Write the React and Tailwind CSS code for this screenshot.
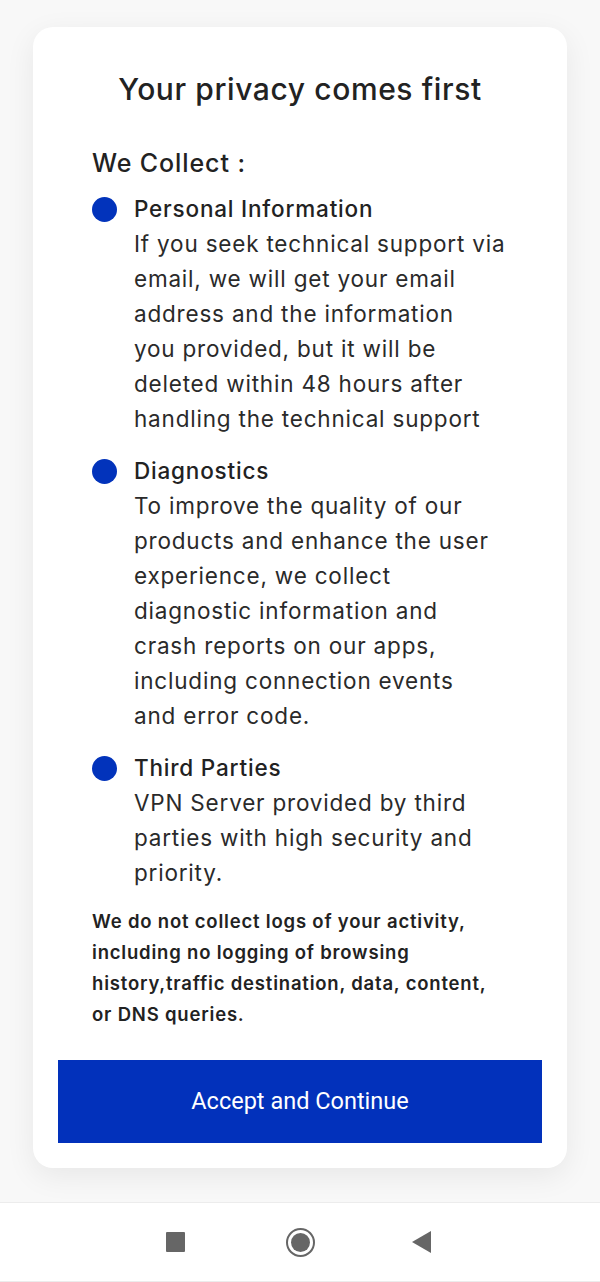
import React from 'react';

const ITEMS = [
    {
        title: 'Personal Information',
        lines: [
            'If you seek technical support via',
            'email, we will get your email',
            'address and the information',
            'you provided, but it will be',
            'deleted within 48 hours after',
            'handling the technical support',
        ],
    },
    {
        title: 'Diagnostics',
        lines: [
            'To improve the quality of our',
            'products and enhance the user',
            'experience, we collect',
            'diagnostic information and',
            'crash reports on our apps,',
            'including connection events',
            'and error code.',
        ],
    },
    {
        title: 'Third Parties',
        lines: [
            'VPN Server provided by third',
            'parties with high security and',
            'priority.',
        ],
    },
];

const NOTE = [
    'We do not collect logs of your activity,',
    'including no logging of browsing',
    'history,traffic destination, data, content,',
    'or DNS queries.',
];

export default function App() {
    return (
        <div className="min-h-screen bg-[#f8f8f8] flex flex-col font-['Inter',sans-serif] text-[#222]">
            <div className="px-[33px] pt-[27px] pb-[34px]">
                <div className="bg-white rounded-[20px] shadow-[0_8px_30px_rgba(0,0,0,0.07)] px-[25px] pt-[42px] pb-[25px]">
                    <h1 className="text-center text-[30px] leading-[40px] font-medium tracking-[0.6px]">
                        Your privacy comes first
                    </h1>

                    <div className="px-[34px]">
                        <h2 className="mt-[36px] text-[25px] leading-[36px] font-medium tracking-[0.9px]">We Collect :</h2>

                        <div className="mt-[10px] flex flex-col gap-[17px]">
                            {ITEMS.map(item => (
                                <div key={item.title} className="flex gap-[17px]">
                                    <div className="w-[25px] h-[25px] mt-[6px] rounded-full bg-[#0233bb] shrink-0" />
                                    <div className="tracking-[0.8px]">
                                        <div className="text-[22.5px] leading-[35px] font-medium">{item.title}</div>
                                        <div className="text-[22.5px] leading-[35px] text-[#2a2a2a]">
                                            {item.lines.map(line => (
                                                <div key={line}>{line}</div>
                                            ))}
                                        </div>
                                    </div>
                                </div>
                            ))}
                        </div>

                        <div className="mt-[16px] text-[18.5px] leading-[31px] font-semibold tracking-[0.8px]">
                            {NOTE.map(line => (
                                <div key={line}>{line}</div>
                            ))}
                        </div>
                    </div>

                    <button className="mt-[30px] w-full h-[83px] bg-[#0231bb] text-white text-[23.5px] font-['Roboto',sans-serif]">
                        Accept and Continue
                    </button>
                </div>
            </div>

            <nav className="h-[80px] pr-[4px] bg-white border-t border-b border-[#ececec] flex items-center justify-center">
                <div className="w-[19px] h-[20px] bg-[#666] rounded-[1px]" />
                <div className="ml-[101px] w-[29px] h-[29px] rounded-full border-[2.5px] border-[#666] flex items-center justify-center">
                    <div className="w-[19px] h-[19px] rounded-full bg-[#666]" />
                </div>
                <svg className="ml-[96px]" width="20" height="22" viewBox="0 0 20 22">
                    <path d="M20 0 L20 22 L1 11 Z" fill="#666" />
                </svg>
            </nav>
        </div>
    );
}
